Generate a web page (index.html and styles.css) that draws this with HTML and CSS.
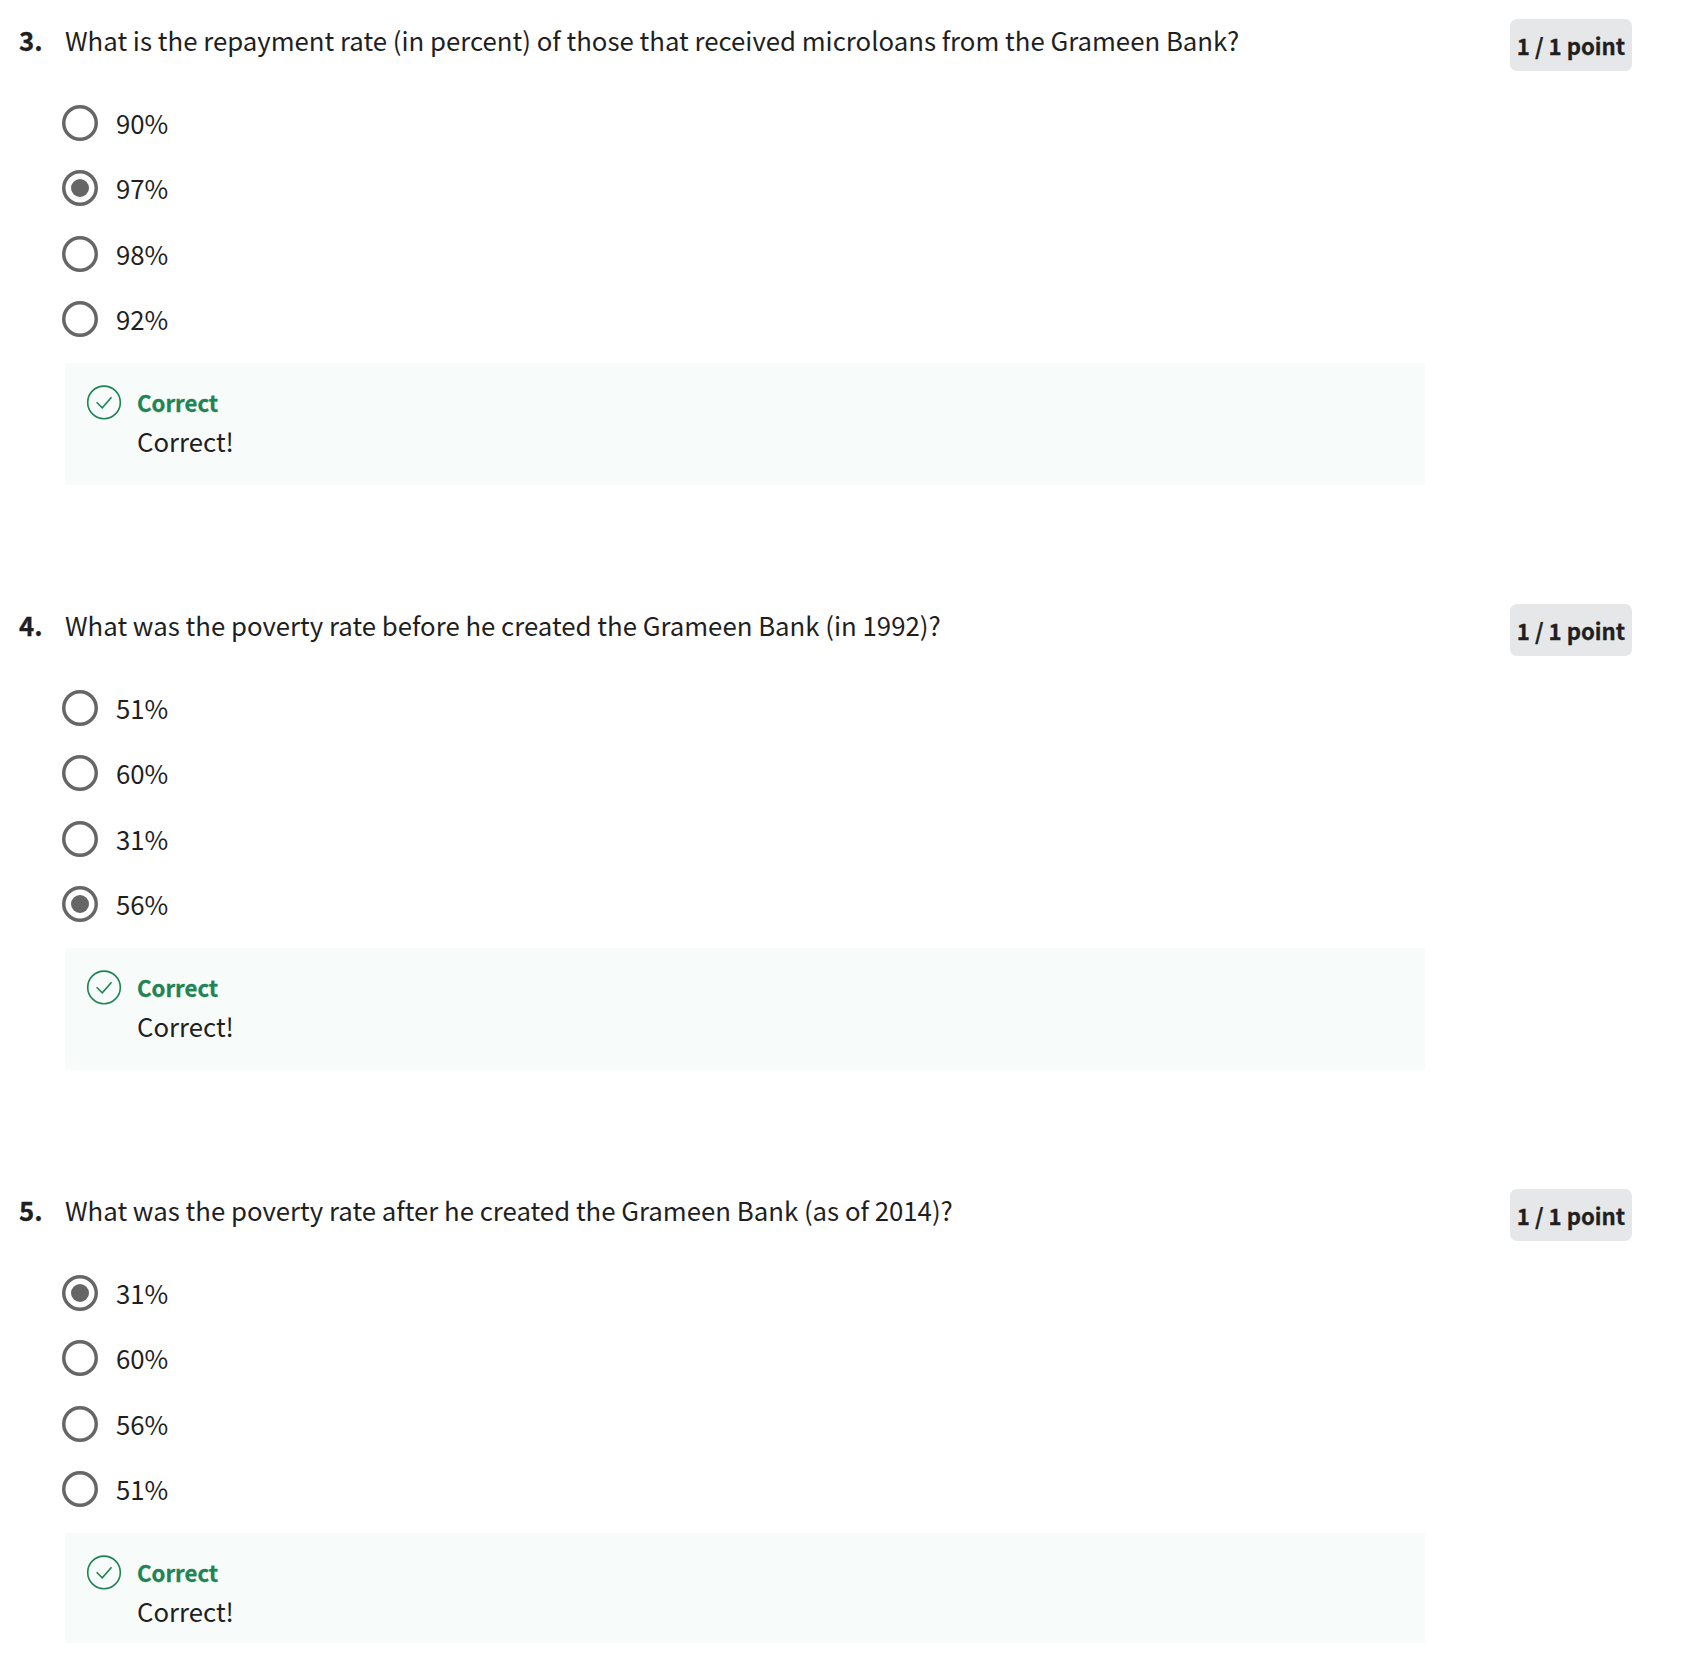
FILE: index.html
```html
<!DOCTYPE html>
<html lang="en">
<head>
<meta charset="utf-8">
<title>Quiz results</title>
<link rel="stylesheet" href="styles.css">
</head>
<body>
<svg class="sprite" aria-hidden="true">
  <symbol id="check" viewBox="0 0 36 36">
    <circle cx="18" cy="18.4" r="16.3"/>
    <path d="M10.6 18.2 16.3 23.8 25.5 13.2"/>
  </symbol>
</svg>
<main class="quiz">
  <section class="question">
    <header class="head">
      <span class="number">3.</span>
      <h2 class="prompt">What is the repayment rate (in percent) of those that received microloans from the Grameen Bank?</h2>
      <span class="points">1 / 1 point</span>
    </header>
    <ul class="options">
      <li class="option"><span class="radio"></span><span>90%</span></li>
      <li class="option"><span class="radio checked"></span><span>97%</span></li>
      <li class="option"><span class="radio"></span><span>98%</span></li>
      <li class="option"><span class="radio"></span><span>92%</span></li>
    </ul>
    <div class="feedback">
      <svg class="icon"><use href="#check"/></svg>
      <div><p class="verdict">Correct</p><p class="message">Correct!</p></div>
    </div>
  </section>
  <section class="question">
    <header class="head">
      <span class="number">4.</span>
      <h2 class="prompt">What was the poverty rate before he created the Grameen Bank (in 1992)?</h2>
      <span class="points">1 / 1 point</span>
    </header>
    <ul class="options">
      <li class="option"><span class="radio"></span><span>51%</span></li>
      <li class="option"><span class="radio"></span><span>60%</span></li>
      <li class="option"><span class="radio"></span><span>31%</span></li>
      <li class="option"><span class="radio checked"></span><span>56%</span></li>
    </ul>
    <div class="feedback">
      <svg class="icon"><use href="#check"/></svg>
      <div><p class="verdict">Correct</p><p class="message">Correct!</p></div>
    </div>
  </section>
  <section class="question">
    <header class="head">
      <span class="number">5.</span>
      <h2 class="prompt">What was the poverty rate after he created the Grameen Bank (as of 2014)?</h2>
      <span class="points">1 / 1 point</span>
    </header>
    <ul class="options">
      <li class="option"><span class="radio checked"></span><span>31%</span></li>
      <li class="option"><span class="radio"></span><span>60%</span></li>
      <li class="option"><span class="radio"></span><span>56%</span></li>
      <li class="option"><span class="radio"></span><span>51%</span></li>
    </ul>
    <div class="feedback">
      <svg class="icon"><use href="#check"/></svg>
      <div><p class="verdict">Correct</p><p class="message">Correct!</p></div>
    </div>
  </section>
</main>
</body>
</html>
```
FILE: styles.css
```css
* { box-sizing: border-box; margin: 0; padding: 0; }
body {
  background: #fff;
  color: #1f1f1f;
  font-family: "Noto Sans CJK SC", "Noto Sans", sans-serif;
  font-size: 25.78px;
  line-height: 40px;
}
.sprite { display: none; }
.quiz { height: 1643px; overflow: hidden; }
.question { height: 585px; padding-top: 19px; }
.head {
  display: grid;
  grid-template-columns: 46px 1fr 122px;
  width: 1613px;
  height: 71px;
  margin-left: 19px;
  align-items: start;
}
.number { font-weight: 700; line-height: 42px; }
.prompt { font-size: inherit; font-weight: 400; line-height: 42px; white-space: nowrap; }
.number, .points, .verdict { -webkit-text-stroke: 0.3px currentColor; }
.points {
  height: 52px;
  line-height: 52px;
  border-radius: 7px;
  background: #e5e7e8;
  font-size: 22.2px;
  font-weight: 700;
  text-align: center;
  white-space: nowrap;
}
.options { list-style: none; height: 273px; padding-left: 62.4px; }
.option { display: flex; align-items: center; gap: 17.6px; height: 65.5px; }
.radio {
  display: grid;
  place-items: center;
  width: 36px;
  height: 36px;
  border-radius: 50%;
  box-shadow: inset 0 0 0 3.5px #666;
}
.checked::after { content: ""; width: 18px; height: 18px; border-radius: 50%; background: #666; }
.feedback {
  display: flex;
  gap: 15px;
  width: 1360px;
  height: 122px;
  margin-left: 65px;
  padding: 21px 21px 0;
  background: #f7fbf9;
}
.icon { width: 36px; height: 36px; fill: none; stroke: #1f8354; stroke-width: 1.6; }
.verdict { color: #1f8354; font-size: 22.2px; font-weight: 700; line-height: 37px; }
.message { line-height: 40px; }
```
